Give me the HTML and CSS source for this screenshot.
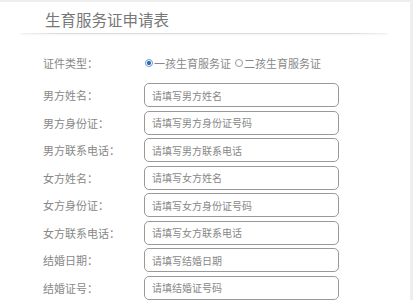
FILE: index.html
```html
<!DOCTYPE html>
<html lang="zh-CN">
<head>
    <meta charset="UTF-8">
    <meta name="viewport" content="width=device-width, initial-scale=1.0">
    <title>生育服务证申请表</title>
    <link rel="stylesheet" href="styles.css">
</head>
<body>
    <div class="pagina">
        <h1 class="titulo">生育服务证申请表</h1>
        <div class="linea"></div>
        <form class="formulario">
            <div class="fila fila-radio">
                <label class="etiqueta">证件类型：</label>
                <div class="opciones">
                    <label class="opcion"><input type="radio" name="tipo" checked>一孩生育服务证</label>
                    <label class="opcion"><input type="radio" name="tipo">二孩生育服务证</label>
                </div>
            </div>
            <div class="fila">
                <label class="etiqueta">男方姓名：</label>
                <input type="text" class="campo" placeholder="请填写男方姓名">
            </div>
            <div class="fila">
                <label class="etiqueta">男方身份证：</label>
                <input type="text" class="campo" placeholder="请填写男方身份证号码">
            </div>
            <div class="fila">
                <label class="etiqueta">男方联系电话：</label>
                <input type="text" class="campo" placeholder="请填写男方联系电话">
            </div>
            <div class="fila">
                <label class="etiqueta">女方姓名：</label>
                <input type="text" class="campo" placeholder="请填写女方姓名">
            </div>
            <div class="fila">
                <label class="etiqueta">女方身份证：</label>
                <input type="text" class="campo" placeholder="请填写女方身份证号码">
            </div>
            <div class="fila">
                <label class="etiqueta">女方联系电话：</label>
                <input type="text" class="campo" placeholder="请填写女方联系电话">
            </div>
            <div class="fila">
                <label class="etiqueta">结婚日期：</label>
                <input type="text" class="campo" placeholder="请填写结婚日期">
            </div>
            <div class="fila">
                <label class="etiqueta">结婚证号：</label>
                <input type="text" class="campo" placeholder="请填结婚证号码">
            </div>
        </form>
    </div>
</body>
</html>
```
FILE: styles.css
```css
body {
    margin: 0;
    font-family: "Noto Sans CJK SC", "Noto Sans", sans-serif;
    background-color: #fff;
    border-top: 2px solid #eee;
}
.pagina {
    width: 410px;
    height: 298px;
    border-right: 3px solid #eee;
    overflow: hidden;
}
.titulo {
    margin: 0;
    padding-left: 45px;
    height: 31px;
    line-height: 34px;
    font-size: 15.5px;
    font-weight: normal;
    color: #777;
}
.linea {
    margin-left: 20px;
    width: 368px;
    height: 1px;
    background: linear-gradient(to right, #f4f4f4, #dcdcdc 10%, #dcdcdc 90%, #f4f4f4);
    box-shadow: 0 1px 2px rgba(0, 0, 0, 0.06);
}
.formulario {
    padding-top: 19px;
    padding-left: 43px;
}
.fila {
    display: flex;
    align-items: center;
    height: 24px;
    margin-bottom: 3.5px;
}
.fila-radio {
    height: 20px;
    margin-bottom: 10px;
}
.etiqueta {
    width: 101px;
    font-size: 11px;
    color: #888;
}
.opciones {
    display: flex;
    gap: 3px;
    font-size: 11px;
    color: #888;
}
.opcion {
    display: flex;
    align-items: center;
}
.opcion input {
    appearance: none;
    margin: 0 1px 0 1px;
    width: 8px;
    height: 8px;
    border: 1px solid #999;
    border-radius: 50%;
    box-sizing: border-box;
}
.opcion input:checked {
    border-color: #6a9ad2;
    background: radial-gradient(circle, #2f6fb8 45%, #fff 55%);
}
.campo {
    box-sizing: border-box;
    width: 195px;
    height: 24px;
    padding: 0 7px;
    border: 1px solid #999;
    border-radius: 5px;
    font-family: inherit;
    font-size: 10px;
    color: #666;
    outline: none;
}
.campo::placeholder {
    color: #888;
}
```
